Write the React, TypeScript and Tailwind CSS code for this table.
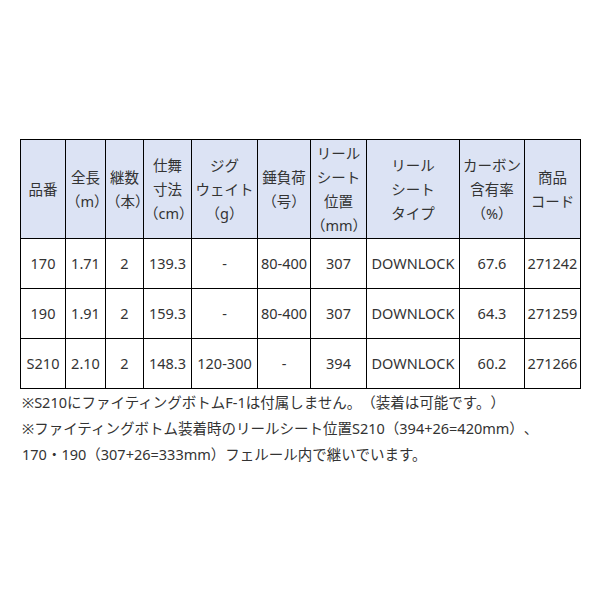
const font = { fontFamily: '"Noto Sans", "Noto Sans CJK JP", sans-serif' };

type Row = string[];

const widths = [
  "w-[45px]",
  "w-[40px]",
  "w-[38px]",
  "w-[48px]",
  "w-[66px]",
  "w-[53px]",
  "w-[56px]",
  "w-[93px]",
  "w-[65px]",
  "w-[56px]",
];

const headers: string[][] = [
  ["品番"],
  ["全長", "（m）"],
  ["継数", "（本）"],
  ["仕舞", "寸法", "（cm）"],
  ["ジグ", "ウェイト", "（g）"],
  ["錘負荷", "（号）"],
  ["リール", "シート", "位置", "（mm）"],
  ["リール", "シート", "タイプ"],
  ["カーボン", "含有率", "（%）"],
  ["商品", "コード"],
];

const rows: Row[] = [
  ["170", "1.71", "2", "139.3", "-", "80-400", "307", "DOWNLOCK", "67.6", "271242"],
  ["190", "1.91", "2", "159.3", "-", "80-400", "307", "DOWNLOCK", "64.3", "271259"],
  ["S210", "2.10", "2", "148.3", "120-300", "-", "394", "DOWNLOCK", "60.2", "271266"],
];

export default function App() {
  return (
    <div className="w-[600px] h-[600px] bg-white px-[20px] pt-[139px] text-[#333]" style={font}>
      <table className="w-[560px] table-fixed border-collapse border border-black text-[14.5px]">
        <colgroup>
          {widths.map((w, i) => (
            <col key={i} className={w} />
          ))}
        </colgroup>
        <thead>
          <tr className="h-[99px] bg-[#dce3f4]">
            {headers.map((lines, i) => (
              <th key={i} className="border border-black p-0 text-center font-normal leading-[24px] whitespace-nowrap">
                {lines.map((l, j) => (
                  <div key={j}>{l}</div>
                ))}
              </th>
            ))}
          </tr>
        </thead>
        <tbody>
          {rows.map((row, r) => (
            <tr key={r} className="h-[50px]">
              {row.map((cell, c) => (
                <td key={c} className="border border-black p-0 text-center whitespace-nowrap">
                  {cell}
                </td>
              ))}
            </tr>
          ))}
        </tbody>
      </table>
      <div className="pl-[2px] text-[14.5px] leading-[26px] whitespace-nowrap [text-spacing-trim:space-all]">
        <p>※S210にファイティングボトムF-1は付属しません。（装着は可能です。）</p>
        <p>※ファイティングボトム装着時のリールシート位置S210（394+26=420mm）、</p>
        <p>170・190（307+26=333mm）フェルール内で継いでいます。</p>
      </div>
    </div>
  );
}
